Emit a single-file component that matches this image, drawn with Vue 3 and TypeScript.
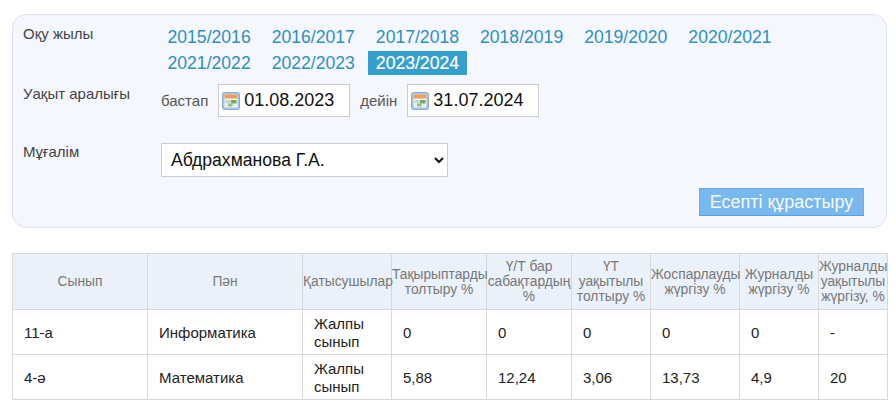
<script setup lang="ts">
const years = [
  '2015/2016', '2016/2017', '2017/2018', '2018/2019', '2019/2020', '2020/2021',
  '2021/2022', '2022/2023', '2023/2024',
]
const current = '2023/2024'

const headers = [
  'Сынып',
  'Пән',
  'Қатысушылар',
  'Тақырыптарды толтыру %',
  'Ү/Т бар сабақтардың %',
  'ҮТ уақытылы толтыру %',
  'Жоспарлауды жүргізу %',
  'Журналды жүргізу %',
  'Журналды уақытылы жүргізу, %',
]

const rows = [
  ['11-а', 'Информатика', 'Жалпы сынып', '0', '0', '0', '0', '0', '-'],
  ['4-ә', 'Математика', 'Жалпы сынып', '5,88', '12,24', '3,06', '13,73', '4,9', '20'],
]
</script>

<template>
  <div class="page">
    <section class="filter">
      <div class="line years-line">
        <div class="label">Оқу жылы</div>
        <div class="years">
          <a v-for="y in years" :key="y" class="year" :class="{ active: y === current }">{{ y }}</a>
        </div>
      </div>

      <div class="line range-line">
        <div class="label">Уақыт аралығы</div>
        <div class="range">
          <span class="hint">бастап</span>
          <label class="date">
            <svg class="cal" viewBox="0 0 18 18" width="18" height="18">
              <rect x="0.5" y="0.5" width="17" height="17" rx="2" fill="#a9c4e6" stroke="#86a9d6" />
              <rect x="2.5" y="2.5" width="13" height="13" fill="#eef1ee" />
              <rect x="2.5" y="2.5" width="13" height="4" fill="#ee9d5c" />
              <rect x="3.5" y="8" width="5" height="3" fill="#c9d2d0" />
              <rect x="9" y="8" width="5.5" height="3.5" fill="#6cb05c" />
              <rect x="6" y="11.5" width="4.5" height="3" fill="#8cc47a" />
            </svg>
            <input class="date-input" value="01.08.2023" />
          </label>
          <span class="hint">дейін</span>
          <label class="date">
            <svg class="cal" viewBox="0 0 18 18" width="18" height="18">
              <rect x="0.5" y="0.5" width="17" height="17" rx="2" fill="#a9c4e6" stroke="#86a9d6" />
              <rect x="2.5" y="2.5" width="13" height="13" fill="#eef1ee" />
              <rect x="2.5" y="2.5" width="13" height="4" fill="#ee9d5c" />
              <rect x="3.5" y="8" width="5" height="3" fill="#c9d2d0" />
              <rect x="9" y="8" width="5.5" height="3.5" fill="#6cb05c" />
              <rect x="6" y="11.5" width="4.5" height="3" fill="#8cc47a" />
            </svg>
            <input class="date-input" value="31.07.2024" />
          </label>
        </div>
      </div>

      <div class="line teacher-line">
        <div class="label">Мұғалім</div>
        <select class="teacher">
          <option>Абдрахманова Г.А.</option>
        </select>
      </div>

      <div class="actions">
        <button class="build" type="button">Есепті құрастыру</button>
      </div>
    </section>

    <table class="report">
      <thead>
        <tr>
          <th v-for="h in headers" :key="h">{{ h }}</th>
        </tr>
      </thead>
      <tbody>
        <tr v-for="row in rows" :key="row[0]">
          <td v-for="(cell, i) in row" :key="i">{{ cell }}</td>
        </tr>
      </tbody>
    </table>
  </div>
</template>

<style scoped>
.page {
  padding: 14px 9px 0 12px;
  font-family: "Liberation Sans", Arial, sans-serif;
  color: #444;
}

.filter {
  height: 214px;
  box-sizing: border-box;
  border: 1px solid #dde3ec;
  border-radius: 14px;
  background: #f4f7fe;
  padding: 10px 22px 0 10px;
}

.line {
  display: flex;
}

.label {
  width: 138px;
  flex: none;
  font-size: 15px;
  line-height: 18px;
  color: #444;
}

.years {
  width: 640px;
  display: flex;
  flex-wrap: wrap;
  gap: 2px 6px;
  margin-left: -1px;
}

.year {
  height: 24px;
  padding: 0 7.5px;
  font-size: 17.6px;
  line-height: 24px;
  color: #2f8fbf;
}

.year.active {
  background: #349fcd;
  color: #fff;
  -webkit-text-stroke: 0.2px #fff;
}

.range-line {
  margin-top: 9px;
}

.range-line .label {
  padding-top: 1px;
}

.range {
  display: flex;
  align-items: center;
}

.hint {
  font-size: 15px;
  color: #555;
}

.date {
  width: 132px;
  height: 33px;
  box-sizing: border-box;
  display: flex;
  align-items: center;
  gap: 4px;
  margin: 0 10px;
  padding-left: 3px;
  border: 1px solid #ccc;
  background: #fff;
}

.cal {
  flex: none;
}

.date-input {
  width: 100px;
  padding: 0;
  border: 0;
  outline: 0;
  background: transparent;
  font-family: inherit;
  font-size: 18px;
  color: #111;
}

.teacher-line {
  margin-top: 26px;
}

.teacher {
  width: 287px;
  height: 34px;
  padding-left: 5px;
  border: 1px solid #ccc;
  border-radius: 0;
  background: #fff;
  font-family: inherit;
  font-size: 17.6px;
  color: #111;
}

.actions {
  display: flex;
  justify-content: flex-end;
  margin-top: 11px;
}

.build {
  width: 165px;
  height: 28px;
  padding: 0;
  border: 1px solid #6aaee6;
  border-bottom-color: #5a9fd6;
  background: #78b8ec;
  font-family: inherit;
  font-size: 18px;
  line-height: 24px;
  color: #f4f9ff;
}

.report {
  width: 875px;
  margin-top: 25px;
  border-collapse: collapse;
  table-layout: fixed;
  font-size: 15px;
}

.report th,
.report td {
  box-sizing: border-box;
  border: 1px solid #d8d8d8;
}

.report th {
  height: 56px;
  padding: 0;
  background: #ebf1fa;
  font-size: 13.8px;
  font-weight: 400;
  line-height: 15px;
  text-align: center;
  color: #777;
}

.report td {
  height: 45px;
  padding: 2px 10px 0 11px;
  line-height: 18px;
  color: #222;
}

.report th:nth-child(1) { width: 135px; }
.report th:nth-child(2) { width: 155px; }
.report th:nth-child(3) { width: 89px; }
.report th:nth-child(4) { width: 95px; }
.report th:nth-child(5) { width: 85px; }
.report th:nth-child(6) { width: 79px; }
.report th:nth-child(7) { width: 89px; }
.report th:nth-child(8) { width: 79px; }
.report th:nth-child(9) { width: 69px; }
</style>

<style>
html,
body {
  margin: 0;
  height: 401px;
  overflow: hidden;
  background: #fff;
}
</style>
